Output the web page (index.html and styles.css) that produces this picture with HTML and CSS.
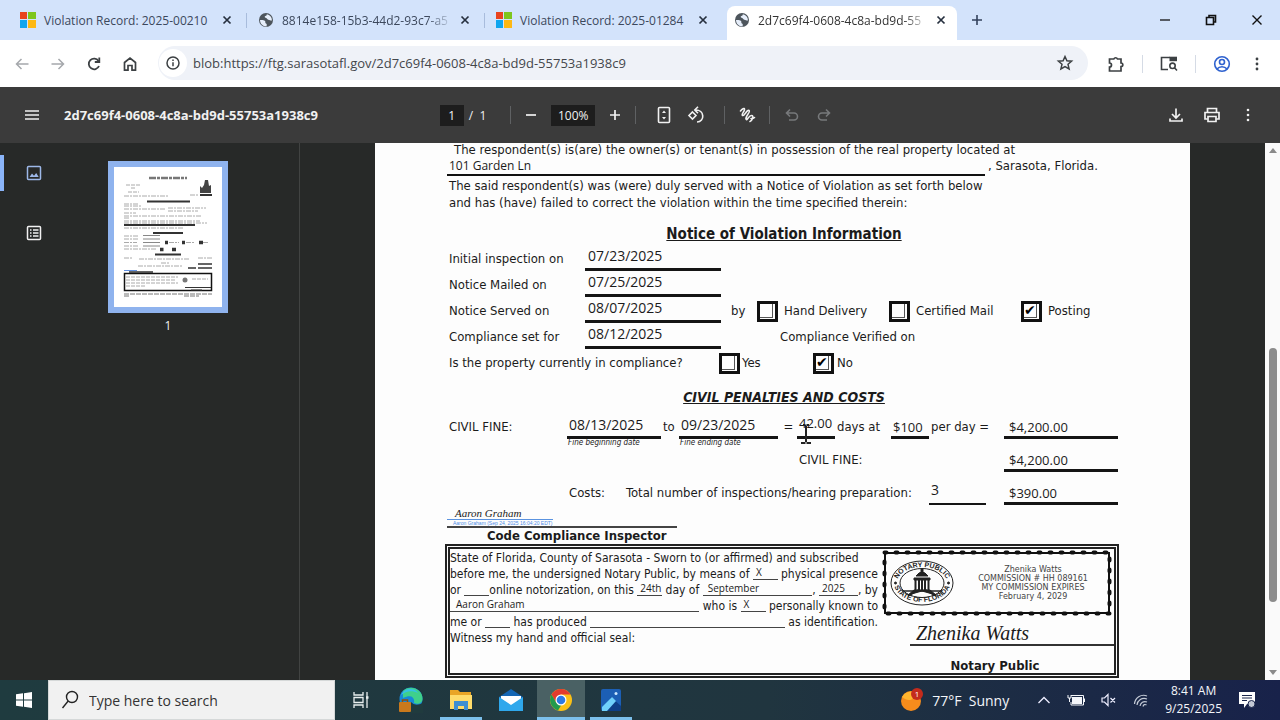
FILE: index.html
```html
<!DOCTYPE html>
<html lang="en">
<head>
    <meta charset="UTF-8">
    <meta name="viewport" content="width=device-width, initial-scale=1.0">
    <title>2d7c69f4-0608-4c8a-bd9d-55753a1938c9</title>
    <link rel="stylesheet" href="styles.css">
</head>
<body>

<!-- icons used more than once -->
<svg width="0" height="0" class="defs" aria-hidden="true">
    <symbol id="ms" viewBox="0 0 16 16">
        <path fill="#e8431f" d="M0 0h7v7H0z"/><path fill="#7ec61c" d="M8 0h8v7H8z"/>
        <path fill="#10a5ee" d="M0 8h7v8H0z"/><path fill="#fdb813" d="M8 8h8v8H8z"/>
    </symbol>
    <symbol id="globe" viewBox="0 0 16 16">
        <circle cx="8" cy="8" r="7" fill="#4d555c"/>
        <path fill="#e6eefa" d="M2 8c2 0 4-.2 5 1s-.4 2 1 2.500c1.300.4.6 1.700.6 2.900C5 14.600 2 11.800 2 8zM8.500 2.200c1 .6-.2 1.600-1.200 1.900-.9.300-.6 1.500.3 1.700 1.800.3 1.400 2 3.400 2.300 1.100.2 1.600.8 2.800.5.600-3-1.800-6-5.300-6.400z"/>
    </symbol>
    <symbol id="x" viewBox="0 0 16 16">
        <path d="M4.500 4.500l7 7M11.500 4.500l-7 7" stroke="currentColor" stroke-width="1.700" fill="none"/>
    </symbol>
</svg>

<header class="tabs">
    <div class="tab">
        <svg width="16" height="16"><use href="#ms"/></svg>
        <span class="tab-title">Violation Record: 2025-00210</span>
        <button class="tab-close" aria-label="Close tab"><svg width="16" height="16"><use href="#x"/></svg></button>
    </div>
    <div class="tab">
        <svg width="16" height="16"><use href="#globe"/></svg>
        <span class="tab-title fade">8814e158-15b3-44d2-93c7-a5</span>
        <button class="tab-close" aria-label="Close tab"><svg width="16" height="16"><use href="#x"/></svg></button>
    </div>
    <div class="tab last">
        <svg width="16" height="16"><use href="#ms"/></svg>
        <span class="tab-title">Violation Record: 2025-01284</span>
        <button class="tab-close" aria-label="Close tab"><svg width="16" height="16"><use href="#x"/></svg></button>
    </div>
    <div class="tab active">
        <svg width="16" height="16"><use href="#globe"/></svg>
        <span class="tab-title fade">2d7c69f4-0608-4c8a-bd9d-55</span>
        <button class="tab-close" aria-label="Close tab"><svg width="16" height="16"><use href="#x"/></svg></button>
    </div>
    <button class="new-tab" aria-label="New tab"><svg width="16" height="16" viewBox="0 0 16 16"><path d="M8 3v10M3 8h10" stroke="#33415c" stroke-width="1.600"/></svg></button>
    <div class="window-buttons">
        <button aria-label="Minimize"><svg width="12" height="12" viewBox="0 0 12 12"><path d="M1 6h10" stroke="#111" stroke-width="1.300"/></svg></button>
        <button aria-label="Restore"><svg width="12" height="12" viewBox="0 0 12 12" fill="none" stroke="#111" stroke-width="1.600"><path d="M1.500 3.500h7v7h-7zM4 3V1.500h6.500V8H9"/></svg></button>
        <button aria-label="Close"><svg width="12" height="12" viewBox="0 0 12 12"><path d="M1.500 1.500l9 9M10.500 1.500l-9 9" stroke="#111" stroke-width="1.400"/></svg></button>
    </div>
</header>

<nav class="toolbar">
    <button aria-label="Back"><svg width="16" height="16" viewBox="0 0 16 16" fill="none" stroke="#a5a8ac" stroke-width="1.500"><path d="M14.500 8H2.500M7.500 3L2.500 8l5 5"/></svg></button>
    <button aria-label="Forward"><svg width="16" height="16" viewBox="0 0 16 16" fill="none" stroke="#a5a8ac" stroke-width="1.500"><path d="M1.500 8h12M8.500 3l5 5-5 5"/></svg></button>
    <button aria-label="Reload"><svg width="16" height="16" viewBox="0 0 16 16" fill="none" stroke="#3c4043" stroke-width="1.800"><path d="M13 10A5.300 5.300 0 1 1 12.500 5"/><path d="M13.300 1.500V6H8.800"/></svg></button>
    <button aria-label="Home"><svg width="16" height="16" viewBox="0 0 16 16" fill="none" stroke="#3c4043" stroke-width="1.700"><path d="M2.500 14.200V6.500L8 2l5.500 4.500v7.700H10V9.500H6v4.700z"/></svg></button>
    <div class="omnibox">
        <span class="site-info"><svg width="16" height="16" viewBox="0 0 16 16" fill="none" stroke="#3c4043" stroke-width="1.500"><circle cx="8" cy="8" r="6"/><path d="M8 7.200v4M8 4.500v1.500"/></svg></span>
        <input type="text" class="url" aria-label="Address" value="blob:https://ftg.sarasotafl.gov/2d7c69f4-0608-4c8a-bd9d-55753a1938c9">
        <button aria-label="Bookmark this page"><svg width="18" height="18" viewBox="0 0 18 18" fill="none" stroke="#3c4043" stroke-width="1.500"><path d="M9 2.500l1.900 4.300 4.700.4-3.600 3.100 1.100 4.600L9 12.500l-4.100 2.400L6 10.300 2.400 7.200l4.700-.4z"/></svg></button>
    </div>
    <div class="toolbar-right">
        <button aria-label="Extensions"><svg width="18" height="18" viewBox="0 0 18 18"><path d="M2.500 4h4.300a2 2 0 0 1 3.700 0H14v4a1.800 1.800 0 0 1 0 3.600V16H2.500v-4a2 2 0 0 0 0-4z" fill="none" stroke="#3c4043" stroke-width="1.700"/></svg></button>
        <span class="divider"></span>
        <button aria-label="Side search"><svg width="18" height="18" viewBox="0 0 18 18" fill="none" stroke="#3c4043" stroke-width="1.600"><path d="M8 14.500H1.500v-12H10"/><path fill="#3c4043" stroke="none" d="M9.500 1.700H17v4.500H9.500z"/><circle cx="12.500" cy="10.800" r="2.700"/><path d="M14.500 12.800l2.500 2.700"/></svg></button>
        <span class="divider"></span>
        <button aria-label="Profile"><svg width="18" height="18" viewBox="0 0 18 18" fill="none" stroke="#2f62cf" stroke-width="1.600"><circle cx="9" cy="9" r="7.300"/><circle cx="9" cy="7" r="2.500"/><path d="M4 14c2.500-3 7.500-3 10 0"/></svg></button>
        <button aria-label="Menu"><svg width="16" height="16" viewBox="0 0 16 16" fill="#3c4043"><circle cx="8" cy="3" r="1.400"/><circle cx="8" cy="8" r="1.400"/><circle cx="8" cy="13" r="1.400"/></svg></button>
    </div>
</nav>

<div class="pdf-bar">
    <div class="pdf-left">
        <button aria-label="Toggle sidebar"><svg width="16" height="16" viewBox="0 0 16 16" stroke="#f1f1f1" stroke-width="1.500"><path d="M1 4h14M1 8h14M1 12h14"/></svg></button>
        <h1>2d7c69f4-0608-4c8a-bd9d-55753a1938c9</h1>
    </div>
    <div class="pdf-center">
        <input type="text" class="page-no" aria-label="Page number" value="1">
        <span class="page-count">/&nbsp;&nbsp;1</span>
        <span class="divider"></span>
        <button aria-label="Zoom out"><svg width="16" height="16" viewBox="0 0 16 16" stroke="#f1f1f1" stroke-width="1.700"><path d="M3 8h10"/></svg></button>
        <input type="text" class="zoom-level" aria-label="Zoom level" value="100%">
        <button aria-label="Zoom in"><svg width="16" height="16" viewBox="0 0 16 16" stroke="#f1f1f1" stroke-width="1.700"><path d="M3 8h10M8 3v10"/></svg></button>
        <span class="divider"></span>
        <button class="tool" aria-label="Fit to page"><svg width="18" height="18" viewBox="0 0 18 18" fill="none" stroke="#f1f1f1" stroke-width="1.600"><rect x="3.500" y="1.500" width="11" height="15" rx="1"/><path fill="#f1f1f1" stroke="none" d="M9 4.500l2 2.500H7zM9 13.500l2-2.500H7z"/></svg></button>
        <button class="tool" aria-label="Rotate"><svg width="18" height="18" viewBox="0 0 18 18" fill="none" stroke="#f1f1f1" stroke-width="1.600"><path d="M5.500 6L9 9.500 5.500 13 2 9.500z"/><path d="M8 4c10-.5 10 12 2 12M11 .8L7.800 4 11 7.200"/></svg></button>
        <span class="divider"></span>
        <button class="draw" aria-label="Draw"><svg width="18" height="18" viewBox="0 0 18 18" fill="none" stroke="#f1f1f1" stroke-width="1.600" stroke-linecap="round"><path d="M2.500 5C4 3 6.500 1.500 6.500 3.500S3 8.500 4.500 9.500C6.500 10.500 9 3 11 4.500S7 10.500 8 13c1 2.500 2.500-3.500 5.500-3.500S14 15 12 15.500M13 12.500c1.500.5 2.500 0 3.500-1"/></svg></button>
        <span class="divider"></span>
        <button class="tool history" aria-label="Undo"><svg width="16" height="16" viewBox="0 0 16 16" fill="none" stroke="#77797b" stroke-width="1.600"><path d="M6 2.500L2.500 6 6 9.500M3 6h7a3.500 3.500 0 0 1 0 7H5"/></svg></button>
        <button class="tool" aria-label="Redo"><svg width="16" height="16" viewBox="0 0 16 16" fill="none" stroke="#77797b" stroke-width="1.600"><path d="M10 2.500L13.500 6 10 9.500M13 6H6a3.500 3.500 0 0 0 0 7h5"/></svg></button>
    </div>
    <div class="pdf-right">
        <button aria-label="Download"><svg width="16" height="16" viewBox="0 0 16 16" fill="none" stroke="#f1f1f1" stroke-width="1.700"><path d="M8 1.500v9M4 7l4 4 4-4M2 11.500V14h12v-2.500"/></svg></button>
        <button aria-label="Print"><svg width="18" height="18" viewBox="0 0 18 18" fill="none" stroke="#f1f1f1" stroke-width="1.700"><path d="M4.500 6V2.500h9V6M4.500 13H2V6.500h14V13h-2.500"/><path d="M5 10.500h8v5H5z"/></svg></button>
        <button aria-label="More"><svg width="16" height="16" viewBox="0 0 16 16" fill="#f1f1f1"><circle cx="8" cy="3" r="1.300"/><circle cx="8" cy="8" r="1.300"/><circle cx="8" cy="13" r="1.300"/></svg></button>
    </div>
</div>

<main class="viewer">
    <aside class="sidebar">
        <div class="side-icons">
            <button class="selected" aria-label="Thumbnails"><svg width="16" height="16" viewBox="0 0 16 16" fill="none" stroke="#9db8e8" stroke-width="1.500"><rect x="1.500" y="1.500" width="13" height="13" rx="1"/><path fill="#9db8e8" stroke="none" d="M3.500 12l2.500-3.500 2 2.300L10.200 8l2.500 4z"/></svg></button>
            <button aria-label="Outline"><svg width="16" height="16" viewBox="0 0 16 16" fill="none" stroke="#f1f1f1" stroke-width="1.500"><rect x="1.500" y="1.500" width="13" height="13" rx="1"/><path d="M4 5h1.500M7 5h5.500M4 8h1.500M7 8h5.500M4 11h1.500M7 11h5.500"/></svg></button>
        </div>
        <div class="thumbs">
            <button class="thumb" aria-label="Page 1">
                <svg width="108" height="140" viewBox="0 0 108 140" fill="none" stroke="#333">
                    <path stroke="#777" stroke-width="2.500" stroke-dasharray="7 1 3 1" d="M35 11h38"/>
                    <path stroke="#aaa" stroke-dasharray="4 1" d="M12 18h15M17 21h5M14 25h11"/>
                    <path stroke-width="2" d="M86 28h12"/>
                    <path fill="#444" stroke="none" d="M91 13h3l1 6 2-1v8H86v-7l2 2 2-3z"/>
                    <path stroke="#aaa" stroke-dasharray="5 1 2 1" d="M10 29h45M76 28h8M10 37h14M10 39h18M10 42h42M54 41h38M54 44h30M10 46h12M10 49h78M10 51h6M10 54h76M10 56h83"/>
                    <path stroke-width="2" d="M33 34.500h43M10 58h71M39 66h30M41 87.500h26"/>
                    <path stroke="#aaa" stroke-dasharray="5 1 2 1" d="M10 61h60M10 69h14M10 72h15M10 75.500h13M10 79h14M10 82h32"/>
                    <path stroke="#888" d="M29 68.500h17M29 72h17M29 75.500h17M29 79h17"/>
                    <path stroke-width="3.500" d="M51 75.500h3M68 75.500h3M85 75.500h4M46 82.500h3.500M58 82.500h4"/>
                    <path stroke="#aaa" stroke-dasharray="5 1 2 1" d="M55 75.500h10M72 75.500h8M89 75.500h5M10 91h9M25 92h50M84 91h14M24 99h45M47 96h8"/>
                    <path stroke-width="1.500" d="M84 97h14M84 101h14M74 101h8M15 105h24"/>
                    <path stroke="#5f8fe0" d="M10 103.500h13"/>
                    <rect x="10.500" y="106.500" width="87" height="17" stroke="#111" stroke-width="1.500"/>
                    <path stroke="#aaa" stroke-dasharray="4 1" d="M12 110h52M12 113h50M12 116h52M12 119h20M78 112h16"/>
                    <circle cx="71" cy="113" r="2.500" fill="#777" stroke="none"/><path d="M71 120.500h26M77 123h11"/>
                    <path stroke="#777" stroke-dasharray="5 1" d="M10 127h88M10 129h6M70 129h15"/>
                </svg>
            </button>
            <span class="thumb-no">1</span>
        </div>
    </aside>

    <section class="canvas">
        <article class="paper">
            <p class="line first">The respondent(s) is(are) the owner(s) or tenant(s) in possession of the real property located at</p>
            <p class="address"><span class="address-field">101 Garden Ln</span><span>, Sarasota, Florida.</span></p>
            <p class="line">The said respondent(s) was (were) duly served with a Notice of Violation as set forth below</p>
            <p class="line">and has (have) failed to correct the violation within the time specified therein:</p>

            <h2>Notice of Violation Information</h2>

            <div class="notice-row"><span>Initial inspection on</span><span class="field">07/23/2025</span></div>
            <div class="notice-row"><span>Notice Mailed on</span><span class="field">07/25/2025</span></div>
            <div class="notice-row">
                <span>Notice Served on</span><span class="field">08/07/2025</span><span class="by">by</span>
                <input type="checkbox" id="hand"><label for="hand">Hand Delivery</label>
                <input type="checkbox" id="mail"><label for="mail">Certified Mail</label>
                <input type="checkbox" id="posting" checked><label for="posting">Posting</label>
            </div>
            <div class="notice-row"><span>Compliance set for</span><span class="field">08/12/2025</span><span class="verified">Compliance Verified on</span></div>
            <div class="notice-row comply">
                <span>Is the property currently in compliance?</span>
                <input type="checkbox" id="yes"><label for="yes">Yes</label>
                <input type="checkbox" id="no" checked><label for="no">No</label>
            </div>

            <h2 class="penalties">CIVIL PENALTIES AND COSTS</h2>

            <div class="cost-row">
                <span>CIVIL FINE:</span>
                <div><span class="field">08/13/2025</span><small>Fine beginning date</small></div>
                <span>to</span>
                <div><span class="field">09/23/2025</span><small>Fine ending date</small></div>
                <span class="equals">=</span>
                <div><span class="field days">42.00</span></div>
                <span>days at</span>
                <div><span class="field low">$100</span></div>
                <span>per day =</span>
                <div><span class="field low amount">$4,200.00</span></div>
            </div>
            <div class="cost-row fine">
                <span>CIVIL FINE:</span>
                <div><span class="field low amount">$4,200.00</span></div>
            </div>
            <div class="cost-row inspections">
                <span>Costs:</span>
                <span>Total number of inspections/hearing preparation:</span>
                <div><span class="field thin">3</span></div>
                <div><span class="field low amount">$390.00</span></div>
            </div>

            <div class="inspector">
                <span class="inspector-sign">Aaron Graham</span>
                <span class="inspector-stamp">Aaron Graham (Sep 24, 2025 16:04:20 EDT)</span>
            </div>
            <h3 class="inspector-title">Code Compliance Inspector</h3>

            <div class="notary">
                <div class="sworn">
                    <p>State of Florida, County of Sarasota - Sworn to (or affirmed) and subscribed</p>
                    <p>before me, the undersigned Notary Public, by means of <i class="blank short">X</i> physical presence</p>
                    <p>or <i class="blank short"></i>online notorization, on this <i class="blank short">24th</i> day of <i class="blank month">September</i>, <i class="blank year">2025</i>, by</p>
                    <p><i class="blank grow">Aaron Graham</i> who is <i class="blank short">X</i> personally known to</p>
                    <p>me or <i class="blank short"></i> has produced <i class="blank grow"></i> as identification.</p>
                    <p>Witness my hand and official seal:</p>
                </div>
                <div class="seal">
                    <div class="stamp">
                        <svg class="stamp-edge" width="230" height="66" viewBox="0 0 230 66" fill="none" stroke="#111">
                            <rect x="3" y="3" width="224" height="60" stroke-width="2"/>
                            <rect x="2.500" y="2.500" width="225" height="61" stroke-width="4" stroke-linecap="round" stroke-dasharray="2 9"/>
                        </svg>
                        <svg width="64" height="46" viewBox="0 0 64 46" fill="none" stroke="#222">
                            <ellipse cx="32" cy="23" rx="31" ry="22"/>
                            <ellipse cx="32" cy="23" rx="22" ry="14.500"/>
                            <path id="arcTop" stroke="none" d="M7 23a25 16 0 0 1 50 0"/>
                            <path id="arcBottom" stroke="none" d="M3.500 22a28.500 20 0 0 0 57 0"/>
                            <text class="seal-text"><textPath href="#arcTop" startOffset="50%" text-anchor="middle">NOTARY PUBLIC</textPath></text>
                            <text class="seal-text"><textPath href="#arcBottom" startOffset="50%" text-anchor="middle">STATE OF FLORIDA</textPath></text>
                            <path fill="#222" d="M26 16q6-8 12 0zM24 18h16v2H24zM31 9h2v4h-2z"/>
                            <path stroke-width="2" d="M25.500 20v10M29 20v10M32 20v10M35 20v10M38.500 20v10"/>
                            <path d="M12 31h40M30 29L18 36M34 29l12 7" stroke-width="1.500"/>
                            <path fill="#222" d="M24 30h16l6 5-14-4-14 4z"/>
                            <circle cx="5.500" cy="23" r="1" fill="#222"/><circle cx="58.500" cy="23" r="1" fill="#222"/>
                        </svg>
                        <p>Zhenika Watts<br>COMMISSION # HH 089161<br>MY COMMISSION EXPIRES<br>February 4, 2029</p>
                    </div>
                    <p class="notary-sign">Zhenika Watts</p>
                    <h3>Notary Public</h3>
                </div>
            </div>

            <svg class="text-cursor" width="16" height="22" viewBox="0 0 16 22" fill="none" stroke="#222" stroke-width="2"><path d="M8 3v16M3 20h4.500M8.500 20H13M5 2h2.500M8.500 2H11"/></svg>
        </article>
    </section>

    <div class="scrollbar">
        <svg width="10" height="8" viewBox="0 0 10 8"><path fill="#8a8a8a" d="M5 1l4 5H1z"/></svg>
        <div class="scroll-track"><div class="scroll-thumb"></div></div>
        <svg width="10" height="8" viewBox="0 0 10 8"><path fill="#8a8a8a" d="M5 7l4-5H1z"/></svg>
    </div>
</main>

<footer class="taskbar">
    <button class="start" aria-label="Start"><svg width="16" height="16" viewBox="0 0 16 16" fill="#fff"><path d="M0 2.300L7 1.300v6.200H0zM8 1.200L16 0v7.500H8zM0 8.500h7v6.200l-7-1zM8 8.500h8V16l-8-1.200z"/></svg></button>
    <label class="search">
        <svg width="18" height="20" viewBox="0 0 18 20" fill="none" stroke="#222" stroke-width="1.400"><circle cx="11" cy="7" r="5.500"/><path d="M7 11.200L1.500 18"/></svg>
        <input type="text" placeholder="Type here to search" aria-label="Search">
    </label>
    <div class="apps">
        <button aria-label="Task view"><svg width="18" height="18" viewBox="0 0 18 18" fill="none" stroke="#e8eeee" stroke-width="1.300"><path d="M2 1v3h9V1M2 17v-3h9v3M2 6.500h9v5H2zM15 1v16"/><path stroke-width="2.500" d="M14 6.500h2.500"/></svg></button>
        <button aria-label="Edge"><svg width="26" height="26" viewBox="0 0 26 26">
            <circle cx="13" cy="12" r="11.500" fill="#1689d8"/><path fill="#3fd08b" d="M5 4C12-3 25 2 24.500 12c0 4-4.500 6-8.500 4 1-6-3-9-11-5z"/><path fill="#35c1e6" d="M3 8c4-8 14-7 17-2-6-3-12-2-17 2z"/>
            <path fill="#203b3e" d="M13 15q4 5 12 1v10H12z"/><rect x="1" y="15" width="12" height="10" rx="1" fill="#c9791c"/><path d="M4.500 15v-2h5v2" fill="none" stroke="#8f500c" stroke-width="1.500"/></svg></button>
        <button class="open" aria-label="File Explorer"><svg width="24" height="22" viewBox="0 0 24 22"><path fill="#e9a526" d="M1 1h8l2 2h11v17H1z"/><path fill="#ffdc6b" d="M1 6h22v14H1z"/><path fill="#3f8fd2" d="M5 12h14v9h-4v-4H9v4H5z"/></svg></button>
        <button aria-label="Mail"><svg width="26" height="24" viewBox="0 0 26 24"><path fill="#1466b4" d="M1 9L13 1l12 8v4H1z"/><path fill="#fff" d="M3 8h20v3l-10 7L3 11z"/><path fill="#2fa8ec" d="M1 9l12 8 12-8v14H1z"/></svg></button>
        <button class="open current" aria-label="Chrome"><svg width="24" height="24" viewBox="0 0 24 24"><circle cx="12" cy="12" r="11" fill="#fbc116"/><path fill="#e33b2e" d="M2.500 6.500a11 11 0 0 1 19 0H12L7.200 14.800z"/><path fill="#229a4c" d="M2.500 6.500l4.800 8.300 4.700 2.700-3 5A11 11 0 0 1 2.500 6.500z"/><circle cx="12" cy="12" r="5.500" fill="#fff"/><circle cx="12" cy="12" r="4.300" fill="#2d7ae5"/></svg></button>
        <button class="open" aria-label="Photos"><svg width="22" height="24" viewBox="0 0 22 24"><rect x="1" y="1" width="20" height="22" rx="2" fill="#1c5fb5"/><path fill="#0e3f87" d="M11 9l10 9v5H6z"/><path fill="#6fd0fb" d="M2 19L12 9l4 4-9 10H2z"/><circle cx="16" cy="5.500" r="1.500" fill="#cdeaff"/></svg></button>
    </div>
    <div class="tray">
        <button class="weather">
            <svg width="24" height="24" viewBox="0 0 24 24"><circle cx="11" cy="13" r="10" fill="#f68c1c"/><path fill="#ffb52e" d="M2 9a10 10 0 0 1 14-4c-2 8-8 9-14 4z"/><circle cx="17" cy="6" r="6" fill="#c42b1c"/><text x="17" y="9" class="badge-no">1</text></svg>
            <span>77°F&nbsp; Sunny</span>
        </button>
        <button aria-label="Show hidden icons"><svg width="14" height="10" viewBox="0 0 14 10" fill="none" stroke="#eef" stroke-width="1.300"><path d="M1.500 8L7 2.500 12.500 8"/></svg></button>
        <button aria-label="Battery"><svg width="18" height="12" viewBox="0 0 18 12"><path fill="#f4f6fa" d="M5 3h10v7H5z"/><path fill="none" stroke="#f4f6fa" d="M4 1.500h12.500v9.500H4V8M17.500 4.500v3.500M1 1v3h3V1M2.500 4v4"/></svg></button>
        <button aria-label="Volume"><svg width="16" height="14" viewBox="0 0 16 14" fill="none" stroke="#eef" stroke-width="1.200"><path d="M1 5h2.500L7 1.500v11L3.500 9H1zM9.500 5l4.500 4.500M14 5L9.500 9.500"/></svg></button>
        <button aria-label="Network"><svg width="16" height="16" viewBox="0 0 16 16" fill="none" stroke="#c3cad6" stroke-width="1.200"><path d="M1.500 12C2 6 8 1.500 14 4M4 13c.5-4.500 5-8 10-6M7 14c.5-3 3.500-5.500 7-4M10 14.500c.5-2 2-2.500 3.500-1.500"/></svg></button>
        <div class="clock"><span>8:41 AM</span><span>9/25/2025</span></div>
        <button aria-label="Notifications"><svg width="18" height="18" viewBox="0 0 18 18"><path fill="#fff" d="M1 1h16v12H9l-3 4v-4H1z"/><path stroke="#1b264c" d="M4 4.500h10M4 7h10M4 9.500h5"/><circle cx="13.500" cy="13" r="3.500" fill="#c3c8d4" stroke="#1b264c"/></svg></button>
    </div>
</footer>

</body>
</html>
```
FILE: styles.css
```css
* {
    box-sizing: border-box;
}
body {
    margin: 0;
    height: 100vh;
    display: flex;
    flex-direction: column;
    overflow: hidden;
    font-family: "Open Sans", "Noto Sans", sans-serif;
    font-size: 12px;
    background: #272928;
}
h1, h2, h3, p {
    margin: 0;
}
button {
    display: flex;
    align-items: center;
    justify-content: center;
    padding: 0;
    border: none;
    background: none;
    font: inherit;
    color: inherit;
    cursor: pointer;
}
svg {
    flex: none;
}
.defs {
    position: absolute;
}

/* tab strip */
.tabs {
    display: flex;
    flex: none;
    height: 40px;
    padding: 6px 0 0 9px;
    background: #d3e3fb;
    color: #3c485c;
}
.tab {
    display: flex;
    align-items: center;
    width: 238px;
    padding: 0 12px 6px 11px;
    background: linear-gradient(#a8bcdc, #a8bcdc) no-repeat right 7px / 1px 15px;
}
.tab.last {
    background: none;
}
.tab.active {
    width: 230px;
    margin: 0 4px;
    padding: 0 8px 6px 7px;
    background: #fff;
    border-radius: 8px 8px 0 0;
    color: #333;
}
.tab-title {
    flex: 1;
    margin: 0 4px 0 8px;
    white-space: nowrap;
}
.fade {
    -webkit-mask-image: linear-gradient(90deg, #000 85%, transparent);
    mask-image: linear-gradient(90deg, #000 85%, transparent);
}
.tab-close {
    color: #26303f;
}
.new-tab {
    width: 32px;
    padding-bottom: 6px;
}
.window-buttons {
    display: flex;
    margin-left: auto;
    padding-bottom: 6px;
}
.window-buttons button {
    width: 46px;
}

/* address bar */
.toolbar {
    display: flex;
    flex: none;
    align-items: center;
    height: 47px;
    padding: 0 13px 0 4px;
    background: #fff;
}
.toolbar > button {
    width: 36px;
    height: 36px;
}
.omnibox {
    display: flex;
    flex: 1;
    align-items: center;
    height: 34px;
    margin: 0 18px 2px 10px;
    padding: 0 14px 0 1px;
    border-radius: 17px;
    background: #eff2f8;
}
.site-info {
    display: flex;
    align-items: center;
    justify-content: center;
    width: 28px;
    height: 28px;
    border-radius: 14px;
    background: #fff;
}
.url {
    flex: 1;
    margin-left: 6px;
    padding: 0;
    border: none;
    background: none;
    font: inherit;
    font-size: 13px;
    color: #44474c;
}
.toolbar-right {
    display: flex;
    align-items: center;
    gap: 16px;
}
.toolbar-right button {
    width: 20px;
}
.toolbar-right button + button {
    margin-left: -1px;
}
.divider {
    width: 1px;
    height: 18px;
    background: #d5dbe5;
}

/* pdf toolbar */
.pdf-bar {
    display: flex;
    flex: none;
    align-items: center;
    height: 56px;
    padding: 0 24px;
    background: #3b3b3b;
    color: #f1f1f1;
}
.pdf-left {
    display: flex;
    flex: 1;
    align-items: center;
    gap: 24px;
}
.pdf-left h1 {
    font-size: 13px;
    font-weight: 700;
}
.pdf-center {
    display: flex;
    align-items: center;
}
.pdf-center input {
    height: 21px;
    padding: 0;
    border: none;
    background: #1d1d1d;
    color: #f1f1f1;
    font: inherit;
    text-align: center;
}
.pdf-center .page-no {
    width: 24px;
}
.page-count {
    margin: 0 24px 0 5px;
}
.pdf-center .zoom-level {
    width: 44px;
    margin: 0 12px;
}
.pdf-center .divider {
    margin: 0 12px;
    background: #5f6163;
}
.pdf-center .page-count + .divider {
    margin-left: 0;
}
.tool {
    width: 32px;
}
.draw {
    width: 20px;
}
.history {
    margin-left: -6px;
}
.pdf-right {
    display: flex;
    flex: 1;
    justify-content: flex-end;
    gap: 19px;
}

/* viewer */
.viewer {
    display: flex;
    flex: 1;
    min-height: 0;
}
.sidebar {
    display: flex;
    flex: none;
    width: 300px;
    border-right: 1px solid #414342;
}
.side-icons {
    width: 68px;
    padding-top: 12px;
}
.side-icons button {
    width: 68px;
    height: 36px;
    margin-bottom: 24px;
}
.side-icons .selected {
    border-left: 4px solid #8ab4f8;
    padding-right: 4px;
}
.thumbs {
    display: flex;
    flex-direction: column;
    align-items: center;
    width: 200px;
    padding-top: 18px;
}
.thumb {
    border: 6px solid #8fb3ee;
    background: #fff;
}
.thumb-no {
    margin-top: 4px;
    color: #f1f1f1;
}
.canvas {
    flex: 1;
    display: flex;
    justify-content: center;
    overflow: hidden;
}
.scrollbar {
    display: flex;
    flex-direction: column;
    align-items: center;
    width: 15px;
    padding: 4px 0;
    background: #fafafa;
}
.scroll-track {
    flex: 1;
    padding-top: 193px;
}
.scroll-thumb {
    width: 8px;
    height: 254px;
    border-radius: 4px;
    background: #8c8c8c;
}

/* document */
.paper {
    position: relative;
    flex: none;
    width: 815px;
    height: 1056px;
    padding: 0 71px 0 74px;
    background: #fdfdfd;
    color: #1b1b1b;
    font-family: "DejaVu Sans Condensed", "DejaVu Sans", sans-serif;
    font-size: 13px;
    line-height: 17px;
    white-space: nowrap;
}
.first {
    margin-left: 5px;
    line-height: 14px;
}
.address {
    display: flex;
    margin-left: -2px;
    padding-bottom: 1px;
}
.address-field {
    width: 538px;
    margin-right: 3px;
    padding-left: 2px;
    border-bottom: 2px solid #111;
    font-family: "Open Sans", sans-serif;
    font-size: 12px;
}
.paper h2 {
    margin: 14px 0 3px;
    font-size: 15px;
    line-height: 18px;
    text-align: center;
    text-decoration: underline;
}
.paper h3 {
    font-size: 13px;
    line-height: 16px;
}
.paper h2.penalties {
    margin: 12px 0 8px;
    font-size: 14px;
    font-style: italic;
}
.notice-row {
    display: grid;
    grid-template-columns: 136px 146px 26px 27px 105px 27px 105px 27px auto;
    height: 26px;
    line-height: 26px;
}
.field {
    display: block;
    width: 136px;
    padding: 0 0 3px 3px;
    margin-top: 1px;
    border-bottom: 3px solid #151515;
    font-family: "Open Sans", sans-serif;
    font-size: 14px;
    line-height: 18px;
    height: 24px;
}
.verified {
    grid-column: 5;
    margin-left: -4px;
}
.comply {
    grid-template-columns: 270px 23px 71px 24px auto;
}
input[type="checkbox"] {
    appearance: none;
    width: 21px;
    height: 21px;
    margin: 3px 0;
    border: 3px solid #111;
    background: linear-gradient(#555, #555) no-repeat 12px 0 / 1px 13px,
                linear-gradient(#555, #555) no-repeat 0 13px / 13px 1px;
}
input[type="checkbox"]:checked::before {
    content: "✔";
    display: block;
    font-family: "DejaVu Sans", sans-serif;
    font-size: 14px;
    line-height: 13px;
}
.cost-row {
    display: grid;
    grid-template-columns: 118px 94px 18px 99px 19px 38px 56px 38px 75px 114px;
    height: 33px;
    line-height: 26px;
}
.cost-row > span:not(:first-child) {
    padding-left: 2px;
}
.cost-row .field {
    width: auto;
    height: 25px;
    margin-top: 0;
    padding: 0 0 0 2px;
    line-height: 22px;
}
.cost-row .field.low {
    padding-top: 2px;
    font-size: 13px;
}
.cost-row .field.days {
    font-size: 13px;
    line-height: 18px;
}
.cost-row .field.amount {
    padding-left: 5px;
}
.cost-row .field.thin {
    border-bottom-width: 2px;
    line-height: 20px;
}
.cost-row .equals {
    text-align: center;
}
.cost-row small {
    display: block;
    font-size: 8px;
    font-style: italic;
    line-height: 8px;
    padding-left: 1px;
}
.cost-row.fine {
    grid-template-columns: 350px 205px 114px;
}
.cost-row.fine > span {
    grid-column: 2;
}
.cost-row.inspections {
    grid-template-columns: 118px 57px 305px 57px 18px 114px;
    height: 27px;
}
.cost-row.inspections > span:first-child {
    grid-column: 2;
    padding-left: 2px;
}
.cost-row.inspections > div:last-child {
    grid-column: 6;
}
.inspector {
    display: flex;
    flex-direction: column;
    align-items: flex-start;
    width: 230px;
    margin-left: -2px;
    border-bottom: 2px solid #444;
}
.inspector-sign {
    width: 106px;
    padding-left: 8px;
    border-bottom: 1px solid #5a93e0;
    font-family: "Liberation Serif", serif;
    font-style: italic;
    font-size: 11px;
    line-height: 12px;
}
.inspector-stamp {
    padding-left: 6px;
    color: #4f8ce6;
    font-family: "Liberation Sans", sans-serif;
    font-size: 5px;
    line-height: 6px;
}
.paper .inspector-title {
    padding-left: 38px;
}
.notary {
    display: flex;
    justify-content: space-between;
    height: 134px;
    margin: 0 0 0 -4px;
    border: 5px double #222;
}
.sworn {
    width: 428px;
    padding-top: 1px;
    font-size: 12px;
    line-height: 16px;
}
.sworn p {
    display: flex;
    white-space: pre;
    height: 16px;
}
.blank {
    height: 14px;
    border-bottom: 1px solid #444;
    font-family: "Open Sans", sans-serif;
    font-size: 10px;
    font-style: normal;
    line-height: 12px;
    padding-left: 3px;
}
.short {
    width: 25px;
}
.month {
    width: 110px;
    padding-left: 5px;
}
.year {
    width: 39px;
}
.grow {
    flex: 1;
    padding-left: 6px;
}
.seal {
    width: 232px;
    padding-top: 1px;
}
.stamp {
    position: relative;
    display: flex;
    align-items: center;
    width: 230px;
    height: 66px;
    padding: 0 0 0 8px;
}
.stamp-edge {
    position: absolute;
    left: 0;
    top: 0;
}
.seal-text {
    font-family: "Liberation Sans", sans-serif;
    font-size: 7px;
    font-weight: bold;
    fill: #222;
    stroke: none;
}
.stamp p {
    flex: 1;
    text-align: center;
    font-family: "DejaVu Sans", sans-serif;
    font-size: 8px;
    line-height: 9px;
    color: #444;
}
.notary-sign {
    height: 30px;
    margin-left: 28px;
    padding-left: 6px;
    border-bottom: 2px solid #333;
    font-family: "Liberation Serif", serif;
    font-style: italic;
    font-size: 20px;
    line-height: 34px;
}
.paper .seal h3 {
    padding: 11px 6px 0 0;
    text-align: center;
    line-height: 18px;
}
.text-cursor {
    position: absolute;
    left: 423px;
    top: 280px;
}

/* taskbar */
.taskbar {
    display: flex;
    flex: none;
    align-items: stretch;
    height: 40px;
    background: linear-gradient(90deg, #1f3b3f, #20353f 60%, #18224a);
    color: #f4f6fa;
}
.start {
    width: 48px;
}
.search {
    display: flex;
    align-items: center;
    width: 287px;
    padding-left: 12px;
    gap: 10px;
    border: 1px solid #d5d8d8;
    background: #f1f1f1;
}
.search input {
    flex: 1;
    min-width: 0;
    padding: 0;
    border: none;
    background: none;
    font: inherit;
    font-size: 14px;
}
.search input::placeholder {
    color: #333;
}
.apps {
    display: flex;
    gap: 2px;
    margin-left: 2px;
}
.apps button {
    width: 48px;
}
.apps .open {
    background: linear-gradient(#7cc0ec, #7cc0ec) no-repeat center bottom / 42px 3px;
}
.apps .current {
    background: linear-gradient(#7cc0ec, #7cc0ec) no-repeat center bottom / 48px 3px, #4a6164;
}
.tray {
    display: flex;
    align-items: center;
    gap: 16px;
    margin-left: auto;
    padding-right: 24px;
}
.weather {
    gap: 8px;
    margin-right: 12px;
    font-size: 14px;
}
.badge-no {
    font-size: 8px;
    fill: #fff;
    text-anchor: middle;
}
.clock {
    display: flex;
    flex-direction: column;
    align-items: center;
    font-size: 12px;
    line-height: 18px;
}
```
